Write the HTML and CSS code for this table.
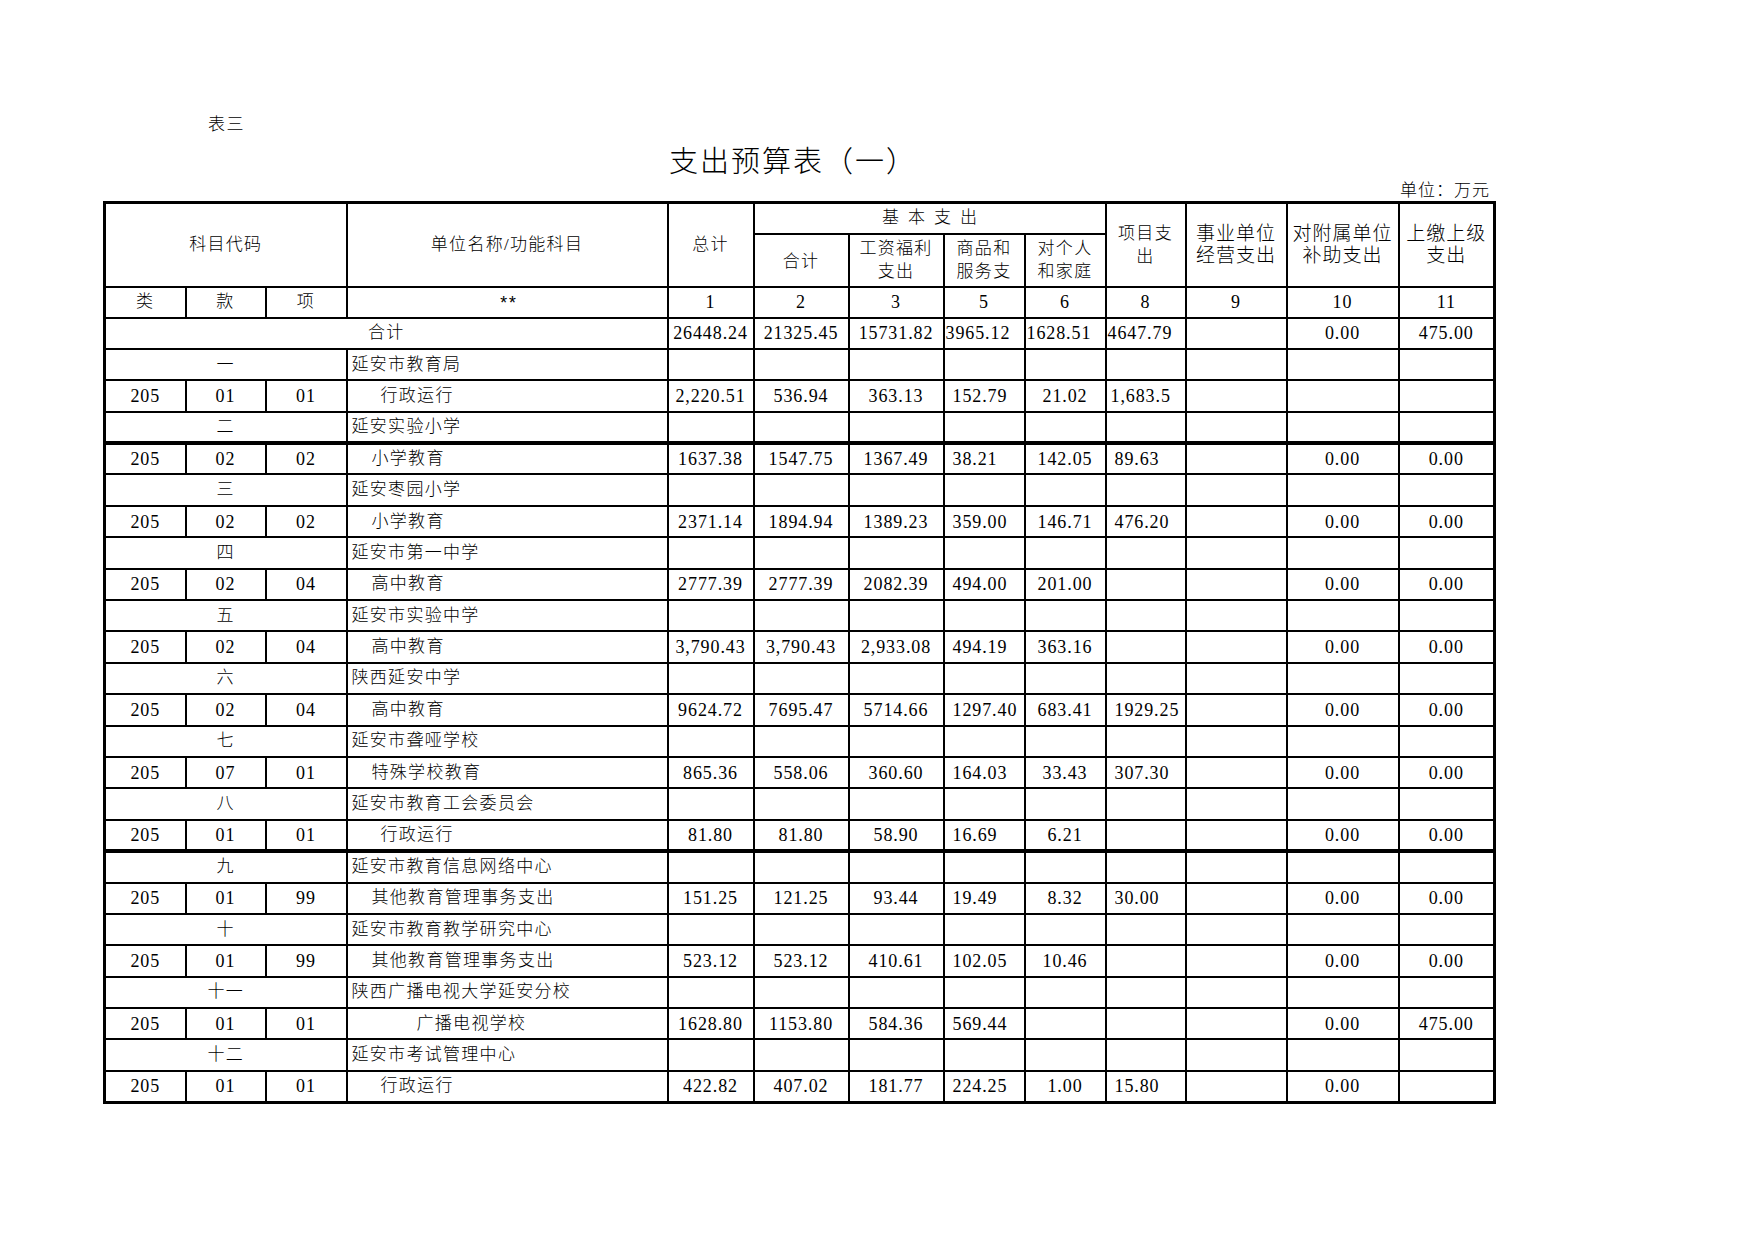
FILE: index.html
```html
<!DOCTYPE html>
<html lang="zh-CN">
<head>
<meta charset="utf-8">
<title>支出预算表（一）</title>
<link rel="stylesheet" href="styles.css">
</head>
<body>
<div class="page">
  <div class="label">表三</div>
  <h1 class="title">支出预算表（一）</h1>
  <div class="unit">单位：万元</div>
  <table class="budget">
    <colgroup>
      <col style="width:81px"><col style="width:80px"><col style="width:81px"><col style="width:321px">
      <col style="width:86px"><col style="width:95px"><col style="width:95px"><col style="width:81px">
      <col style="width:81px"><col style="width:80px"><col style="width:101px"><col style="width:112px"><col style="width:96px">
    </colgroup>
    <thead>
      <tr class="h1">
        <td colspan="3" rowspan="2">科目代码</td>
        <td rowspan="2">单位名称/功能科目</td>
        <td rowspan="2">总计</td>
        <td colspan="4" class="spaced">基本支出</td>
        <td rowspan="2" class="two">项目支<br>出</td>
        <td rowspan="2" class="two big">事业单位<br>经营支出</td>
        <td rowspan="2" class="two big">对附属单位<br>补助支出</td>
        <td rowspan="2" class="two big">上缴上级<br>支出</td>
      </tr>
      <tr class="h2">
        <td class="low">合计</td>
        <td class="two">工资福利<br>支出</td>
        <td class="two">商品和<br>服务支</td>
        <td class="two">对个人<br>和家庭</td>
      </tr>
      <tr class="idx">
        <td>类</td><td>款</td><td>项</td><td class="stars">**</td>
        <td>1</td><td>2</td><td>3</td><td>5</td><td>6</td><td>8</td><td>9</td><td>10</td><td>11</td>
      </tr>
    </thead>
    <tbody>
      <tr class="total">
        <td colspan="4" class="cjk">合计</td>
        <td>26448.24</td><td>21325.45</td><td>15731.82</td><td>3965.12</td><td>1628.51</td><td>4647.79</td><td></td><td>0.00</td><td>475.00</td>
      </tr>

      <tr class="g"><td colspan="3">一</td><td>延安市教育局</td><td></td><td></td><td></td><td></td><td></td><td></td><td></td><td></td><td></td></tr>
      <tr class="d"><td>205</td><td>01</td><td>01</td><td class="i2">行政运行</td><td>2,220.51</td><td>536.94</td><td>363.13</td><td>152.79</td><td>21.02</td><td class="tight">1,683.5</td><td></td><td></td><td></td></tr>

      <tr class="g"><td colspan="3">二</td><td>延安实验小学</td><td></td><td></td><td></td><td></td><td></td><td></td><td></td><td></td><td></td></tr>
      <tr class="d thick"><td>205</td><td>02</td><td>02</td><td class="i1">小学教育</td><td>1637.38</td><td>1547.75</td><td>1367.49</td><td>38.21</td><td>142.05</td><td>89.63</td><td></td><td>0.00</td><td>0.00</td></tr>

      <tr class="g"><td colspan="3">三</td><td>延安枣园小学</td><td></td><td></td><td></td><td></td><td></td><td></td><td></td><td></td><td></td></tr>
      <tr class="d"><td>205</td><td>02</td><td>02</td><td class="i1">小学教育</td><td>2371.14</td><td>1894.94</td><td>1389.23</td><td>359.00</td><td>146.71</td><td>476.20</td><td></td><td>0.00</td><td>0.00</td></tr>

      <tr class="g"><td colspan="3">四</td><td>延安市第一中学</td><td></td><td></td><td></td><td></td><td></td><td></td><td></td><td></td><td></td></tr>
      <tr class="d"><td>205</td><td>02</td><td>04</td><td class="i1">高中教育</td><td>2777.39</td><td>2777.39</td><td>2082.39</td><td>494.00</td><td>201.00</td><td></td><td></td><td>0.00</td><td>0.00</td></tr>

      <tr class="g"><td colspan="3">五</td><td>延安市实验中学</td><td></td><td></td><td></td><td></td><td></td><td></td><td></td><td></td><td></td></tr>
      <tr class="d"><td>205</td><td>02</td><td>04</td><td class="i1">高中教育</td><td>3,790.43</td><td>3,790.43</td><td>2,933.08</td><td>494.19</td><td>363.16</td><td></td><td></td><td>0.00</td><td>0.00</td></tr>

      <tr class="g"><td colspan="3">六</td><td>陕西延安中学</td><td></td><td></td><td></td><td></td><td></td><td></td><td></td><td></td><td></td></tr>
      <tr class="d"><td>205</td><td>02</td><td>04</td><td class="i1">高中教育</td><td>9624.72</td><td>7695.47</td><td>5714.66</td><td>1297.40</td><td>683.41</td><td>1929.25</td><td></td><td>0.00</td><td>0.00</td></tr>

      <tr class="g"><td colspan="3">七</td><td>延安市聋哑学校</td><td></td><td></td><td></td><td></td><td></td><td></td><td></td><td></td><td></td></tr>
      <tr class="d"><td>205</td><td>07</td><td>01</td><td class="i1">特殊学校教育</td><td>865.36</td><td>558.06</td><td>360.60</td><td>164.03</td><td>33.43</td><td>307.30</td><td></td><td>0.00</td><td>0.00</td></tr>

      <tr class="g"><td colspan="3">八</td><td>延安市教育工会委员会</td><td></td><td></td><td></td><td></td><td></td><td></td><td></td><td></td><td></td></tr>
      <tr class="d"><td>205</td><td>01</td><td>01</td><td class="i2">行政运行</td><td>81.80</td><td>81.80</td><td>58.90</td><td>16.69</td><td>6.21</td><td></td><td></td><td>0.00</td><td>0.00</td></tr>

      <tr class="g thick"><td colspan="3">九</td><td>延安市教育信息网络中心</td><td></td><td></td><td></td><td></td><td></td><td></td><td></td><td></td><td></td></tr>
      <tr class="d"><td>205</td><td>01</td><td>99</td><td class="i1">其他教育管理事务支出</td><td>151.25</td><td>121.25</td><td>93.44</td><td>19.49</td><td>8.32</td><td>30.00</td><td></td><td>0.00</td><td>0.00</td></tr>

      <tr class="g"><td colspan="3">十</td><td>延安市教育教学研究中心</td><td></td><td></td><td></td><td></td><td></td><td></td><td></td><td></td><td></td></tr>
      <tr class="d"><td>205</td><td>01</td><td>99</td><td class="i1">其他教育管理事务支出</td><td>523.12</td><td>523.12</td><td>410.61</td><td>102.05</td><td>10.46</td><td></td><td></td><td>0.00</td><td>0.00</td></tr>

      <tr class="g"><td colspan="3">十一</td><td>陕西广播电视大学延安分校</td><td></td><td></td><td></td><td></td><td></td><td></td><td></td><td></td><td></td></tr>
      <tr class="d"><td>205</td><td>01</td><td>01</td><td class="i3">广播电视学校</td><td>1628.80</td><td>1153.80</td><td>584.36</td><td>569.44</td><td></td><td></td><td></td><td>0.00</td><td>475.00</td></tr>

      <tr class="g"><td colspan="3">十二</td><td>延安市考试管理中心</td><td></td><td></td><td></td><td></td><td></td><td></td><td></td><td></td><td></td></tr>
      <tr class="d"><td>205</td><td>01</td><td>01</td><td class="i2">行政运行</td><td>422.82</td><td>407.02</td><td>181.77</td><td>224.25</td><td>1.00</td><td>15.80</td><td></td><td>0.00</td><td></td></tr>
    </tbody>
  </table>
</div>
</body>
</html>
```

FILE: styles.css
```css
html, body {
  margin: 0;
  padding: 0;
  background: #ffffff;
}

body {
  font-family: "Liberation Serif", "Noto Sans CJK SC", serif;
  font-weight: 300;
  color: #000;
}

.page {
  width: 1390px;
  padding: 111px 0 0 103px;
}

.label {
  font-family: "Noto Sans CJK SC", sans-serif;
  font-size: 17px;
  letter-spacing: 1.5px;
  line-height: 24px;
  height: 24px;
  margin-left: 105px;
}

.title {
  margin: 6px 0 0 566px;
  font-family: "Noto Sans CJK SC", sans-serif;
  font-weight: 300;
  font-size: 29px;
  letter-spacing: 2px;
  line-height: 36px;
  height: 36px;
}

.unit {
  font-family: "Noto Sans CJK SC", sans-serif;
  text-align: right;
  font-size: 17px;
  letter-spacing: 1px;
  line-height: 20px;
  height: 20px;
  margin-top: 2px;
  padding-right: 3px;
}

.budget {
  margin-top: 2px;
  width: 1390px;
  table-layout: fixed;
  border-collapse: collapse;
  border: 3px solid #000;
}

.budget td {
  border: 2px solid #000;
  padding: 0;
  text-align: center;
  vertical-align: middle;
  font-size: 17px;
  letter-spacing: 1.3px;
  line-height: 22px;
  white-space: nowrap;
  overflow: hidden;
}

.budget tbody td,
.budget tr.idx td {
  font-size: 18px;
  letter-spacing: 0.9px;
}

.budget tr.idx td:nth-child(-n+3),
.budget tbody td.cjk,
.budget tr.g td,
.budget tr.d td:nth-child(4) {
  font-size: 17px;
  letter-spacing: 1.3px;
}

.budget tr.idx td.stars {
  font-family: "Liberation Mono", monospace;
  font-weight: 400;
  font-size: 18px;
  letter-spacing: -2px;
  padding-top: 4px;
}

.budget tr.h1 { height: 31px; }
.budget tr.h2 { height: 53px; }
.budget tr.idx { height: 31px; }
.budget tbody tr { height: 31.4px; }

.budget td.spaced {
  letter-spacing: 9px;
  padding-left: 9px;
}

.budget td.two {
  line-height: 23px;
  white-space: normal;
}

.budget td.big {
  font-size: 19px;
  letter-spacing: 1px;
  line-height: 22px;
}

.budget td.low {
  padding-top: 3px;
}

/* group name rows */
.budget tr.g td:nth-child(2) {
  text-align: left;
  padding-left: 4px;
}

/* data rows */
.budget tr.d td:nth-child(4) { text-align: left; }
.budget tr.d td.i1 { padding-left: 24px; }
.budget tr.d td.i2 { padding-left: 33px; }
.budget tr.d td.i3 { padding-left: 69px; }

.budget tr.d td:nth-child(8) {
  text-align: left;
  padding-left: 8px;
}

.budget tr.d td:nth-child(10) {
  text-align: left;
  padding-left: 8px;
}

.budget tr.d td.tight {
  padding-left: 4px;
}

/* total row */
.budget tr.total td:nth-child(5),
.budget tr.total td:nth-child(6),
.budget tr.total td:nth-child(7) {
  text-align: left;
  padding-left: 1px;
}

.budget tr.thick td {
  border-top: 4px solid #000;
}
```
